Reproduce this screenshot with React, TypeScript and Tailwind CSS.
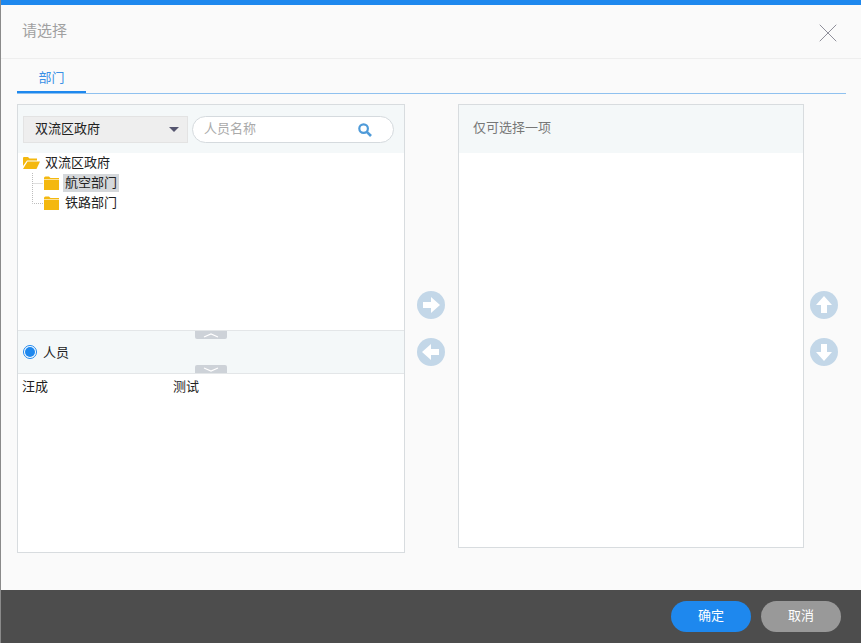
import { X } from "lucide-react";

const cjk = "font-['Microsoft_YaHei','Noto_Sans_CJK_SC',sans-serif]";

function FolderClosed() {
  return (
    <svg width="15" height="14" viewBox="0 0 15 14" className="ml-px shrink-0">
      <path d="M0 2 Q0 0.5 1.5 0.5 H5 L6.5 2 H15 V14 H0 Z" fill="#f4b80f" />
      <path d="M0 3.5 H15" stroke="#fff" strokeWidth="0.8" opacity="0.75" />
    </svg>
  );
}

function FolderOpen() {
  return (
    <svg width="17" height="12" viewBox="0 0 17 12" className="shrink-0">
      <path d="M0 1 Q0 0 1 0 H5 L6.5 1.5 H14 V3.5 H4 L0 9 Z" fill="#f4b80f" />
      <path d="M4.5 4.5 H17 L13.5 12 H0 Z" fill="#f4b80f" />
    </svg>
  );
}

function TreeLine({ last }: { last?: boolean }) {
  return (
    <svg width="12" height="20" viewBox="0 0 12 20" className="shrink-0">
      <path
        d={last ? "M1.5 0 V10.5 H12" : "M1.5 0 V20 M1.5 10.5 H12"}
        stroke="#bdbdbd"
        strokeWidth="1"
        strokeDasharray="1 1"
        fill="none"
      />
    </svg>
  );
}

// round pale blue arrow button
function ArrowButton({ dir }: { dir: "right" | "left" | "up" | "down" }) {
  const paths = {
    right: "M6 11 H14 V6 L23 14 L14 22 V17 H6 Z",
    left: "M22 11 H14 V6 L5 14 L14 22 V17 H22 Z",
    up: "M11 22 V14 H6 L14 5 L22 14 H17 V22 Z",
    down: "M11 6 V14 H6 L14 23 L22 14 H17 V6 Z",
  };
  return (
    <svg width="28" height="28" viewBox="0 0 28 28" className="block">
      <circle cx="14" cy="14" r="14" fill="#c3d7e8" />
      <path d={paths[dir]} fill="#fff" />
    </svg>
  );
}

function SearchIcon() {
  return (
    <svg width="14" height="14" viewBox="0 0 14 14" className="shrink-0">
      <circle cx="5.6" cy="5.6" r="4.3" stroke="#4f9bd9" strokeWidth="2.2" fill="none" />
      <path d="M8.8 8.8 L13 13" stroke="#4f9bd9" strokeWidth="2.6" />
    </svg>
  );
}

function Handle({ up }: { up?: boolean }) {
  return (
    <div
      className={`absolute left-[177px] flex h-2 w-8 items-center justify-center bg-[#cdd2d8] ${
        up ? "top-0 rounded-b-[2px]" : "bottom-0 rounded-t-[2px]"
      }`}
    >
      <svg width="16" height="5" viewBox="0 0 16 5">
        <path
          d={up ? "M1 4 L8 1 L15 4" : "M1 1 L8 4 L15 1"}
          stroke="#fff"
          strokeWidth="1.2"
          fill="none"
        />
      </svg>
    </div>
  );
}

export default function App() {
  return (
    <div
      className={`flex h-[643px] w-[861px] flex-col overflow-hidden border-l border-[#8a8a8a] bg-[#fafafa] ${cjk}`}
    >
      <div className="h-[5px] shrink-0 bg-[#1e88ee]" />

      {/* header */}
      <div className="flex h-[54px] shrink-0 items-center justify-between border-b border-[#eeeeee] pr-[17px] pl-[21px]">
        <span className="-mt-[3px] text-[15px] text-[#a0a0a0]">请选择</span>
        <X size={32} strokeWidth={0.75} className="mt-[3px] text-[#8f8f9a]" />
      </div>

      {/* tabs */}
      <div className="mr-[15px] ml-4 h-[35px] shrink-0 border-b border-[#8fc1ef]">
        <div className="h-[34px] w-[69px] border-b-2 border-[#1e88ee] pt-[9px] text-center text-[13px] leading-[18px] text-[#3a90e6]">
          部门
        </div>
      </div>

      {/* body */}
      <div className="flex min-h-0 flex-1 pt-[10px] pl-4">
        {/* left panel */}
        <div className="flex h-[449px] w-[388px] shrink-0 flex-col border border-[#d8dcdf] bg-white">
          <div className="flex h-[48px] shrink-0 items-start gap-1 bg-[#f4f8f9] pt-[11px] pl-[5px]">
            <div className="flex h-[27px] w-[165px] items-center justify-between border border-[#e3e3e3] bg-[#eeeeee] pr-2 pl-[11px] text-[13px] text-[#222222]">
              <span className="-mt-[3px]">双流区政府</span>
              <span className="h-0 w-0 border-x-[5px] border-t-[5px] border-x-transparent border-t-[#55556f]" />
            </div>
            <div className="flex h-[27px] w-[202px] items-center justify-between rounded-full border border-[#d5dade] bg-white pr-[21px] pl-[11px] text-[13px] text-[#aaaaaa]">
              <span className="-mt-[3px]">人员名称</span>
              <SearchIcon />
            </div>
          </div>

          {/* tree */}
          <div className="h-[177px] shrink-0 pl-[5px] text-[13px] leading-[20px] text-[#222222]">
            <div className="flex h-[20px] items-center gap-1">
              <FolderOpen />
              <span className="-mt-[2px] ml-px">双流区政府</span>
            </div>
            <div className="flex h-[20px] items-center pl-2">
              <TreeLine />
              <FolderClosed />
              <span className="ml-1 h-[18px] bg-[#d5d8db] px-[2px] leading-[16px]">航空部门</span>
            </div>
            <div className="flex h-[20px] items-center pl-2">
              <TreeLine last />
              <FolderClosed />
              <span className="-mt-[2px] ml-1 px-[2px]">铁路部门</span>
            </div>
          </div>

          {/* people bar */}
          <div className="relative flex h-[44px] shrink-0 items-center gap-[6px] border-y border-[#e3e6e8] bg-[#f4f8f9] pl-[5px] text-[13px] text-[#222222]">
            <Handle up />
            <span className="flex h-[14px] w-[14px] items-center justify-center rounded-full border border-[#1e88ee] bg-white">
              <span className="h-[10px] w-[10px] rounded-full bg-[#1e88ee]" />
            </span>
            <span className="-mt-px">人员</span>
            <Handle />
          </div>

          <div className="flex pt-[2px] pl-1 text-[13px] leading-[20px] text-[#222222]">
            <span className="w-[151px]">汪成</span>
            <span>测试</span>
          </div>
        </div>

        {/* move buttons */}
        <div className="flex w-[53px] shrink-0 flex-col items-center gap-[19px] pt-[187px] pr-[2px]">
          <ArrowButton dir="right" />
          <ArrowButton dir="left" />
        </div>

        {/* right panel */}
        <div className="flex h-[444px] w-[346px] shrink-0 flex-col border border-[#d8dcdf] bg-white">
          <div className="flex h-[48px] shrink-0 items-center bg-[#f4f8f9] pb-[5px] pl-[14px] text-[13px] text-[#777777]">
            仅可选择一项
          </div>
        </div>

        {/* sort buttons */}
        <div className="ml-[6px] flex w-[28px] shrink-0 flex-col gap-[19px] pt-[187px]">
          <ArrowButton dir="up" />
          <ArrowButton dir="down" />
        </div>
      </div>

      {/* footer */}
      <div className="flex h-[53px] shrink-0 items-start justify-end gap-[10px] bg-[#4d4d4d] pt-[11px] pr-[20px]">
        <button className="h-[31px] w-[80px] rounded-full bg-[#1e88ee] pb-[3px] text-[13px] text-white">
          确定
        </button>
        <button className="h-[31px] w-[80px] rounded-full bg-[#999999] pb-[3px] text-[13px] text-white">
          取消
        </button>
      </div>
    </div>
  );
}
